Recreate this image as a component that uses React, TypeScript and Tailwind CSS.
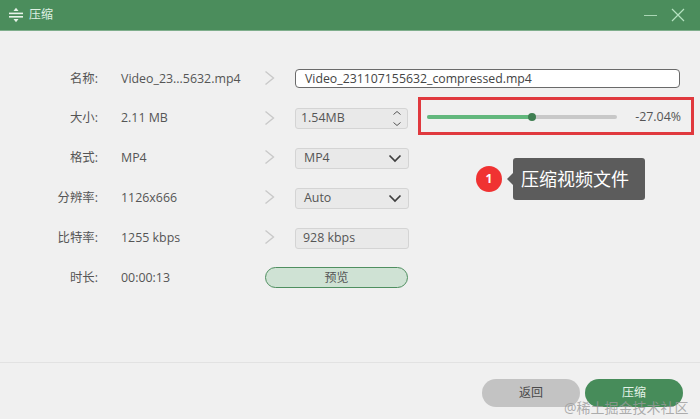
import React from 'react';

const font = { fontFamily: '"Open Sans", "Noto Sans CJK SC", sans-serif' };

const Chevron = () => (
  <svg width="12" height="16" viewBox="0 0 12 16" fill="none" stroke="#c9c9c9" strokeWidth="1.4" className="ml-[166px] -translate-y-[1px]">
    <path d="M1.5 1.5 L9.5 8 L1.5 14.5" />
  </svg>
);

const Caret = () => (
  <svg width="14" height="9" viewBox="0 0 14 9" fill="none" stroke="#3f3f3f" strokeWidth="1.7">
    <path d="M1.5 1.5 L7 7 L12.5 1.5" />
  </svg>
);

const Select = ({ value }: { value: string }) => (
  <div className="w-[114px] h-[21px] flex items-center justify-between pl-[8px] pr-[6px] bg-[#e9e9e9] border border-[#d4d4d4] rounded-[3px] text-[12.4px] text-[#555555]">
    {value}
    <Caret />
  </div>
);

const Row = ({ label, value, arrow = true, children }: { label: string; value: string; arrow?: boolean; children: React.ReactNode }) => (
  <div className="h-[39.8px] flex items-center relative">
    <div className="w-[98px] text-right text-[12.4px] text-[#555555]">{label}</div>
    <div className="absolute left-[121px] text-[12.4px] text-[#555555] whitespace-nowrap">{value}</div>
    {arrow ? <Chevron /> : <div className="w-[12px] ml-[166px]" />}
    <div className={arrow ? 'ml-[19px] flex items-center' : 'flex items-center -ml-[11px]'}>{children}</div>
  </div>
);

export default function App() {
  return (
    <div className="relative w-[700px] h-[419px] overflow-hidden bg-[#f0f0f0] flex flex-col" style={font}>
      <div className="h-[31px] shrink-0 bg-[#4b8d5c] border-b border-[#7fae8c] flex items-center pl-[8px] text-[12px] text-[#dff0e3]">
        <svg width="16" height="16" viewBox="0 0 16 16" fill="#e8f3ea" className="mr-[5px]">
          <rect x="1" y="5.6" width="14" height="1.6" />
          <rect x="1" y="9" width="14" height="1.6" />
          <path d="M8 0.8 L10.5 4 L5.5 4 Z" />
          <path d="M8 15.2 L10.5 12 L5.5 12 Z" />
        </svg>
        压缩
        <div className="ml-auto flex items-center pr-[15px] gap-[14px]">
          <div className="w-[13px] h-[1px] bg-[#a9d6b4]" />
          <svg width="14" height="14" viewBox="0 0 14 14" stroke="#b5e3c1" strokeWidth="1.2">
            <path d="M1 1 L13 13 M13 1 L1 13" />
          </svg>
        </div>
      </div>

      <div className="flex-1 pt-[28px]">
        <Row label="名称:" value="Video_23...5632.mp4">
          <div className="w-[385px] h-[19px] flex items-center pl-[9px] bg-white border border-[#6a6a6a] rounded-[4px] text-[12.3px] text-[#444444]">
            Video_231107155632_compressed.mp4
          </div>
        </Row>
        <Row label="大小:" value="2.11 MB">
          <div className="w-[113px] h-[21px] flex items-center justify-between pl-[5px] pr-[5px] bg-[#e9e9e9] border border-[#d4d4d4] rounded-[3px] text-[12.4px] text-[#555555]">
            1.54MB
            <svg width="10" height="17" viewBox="0 0 10 17" fill="none" stroke="#555555" strokeWidth="1">
              <path d="M1.5 4.5 L5 1.5 L8.5 4.5 M1.5 12.5 L5 15.5 L8.5 12.5" />
            </svg>
          </div>
        </Row>
        <Row label="格式:" value="MP4"><Select value="MP4" /></Row>
        <Row label="分辨率:" value="1126x666"><Select value="Auto" /></Row>
        <Row label="比特率:" value="1255 kbps">
          <div className="w-[114px] h-[21px] flex items-center pl-[7px] bg-[#e9e9e9] border border-[#d4d4d4] rounded-[3px] text-[12.4px] text-[#555555]">
            928 kbps
          </div>
        </Row>
        <Row label="时长:" value="00:00:13" arrow={false}>
          <div className="w-[143px] h-[21px] flex items-center justify-center bg-[#cfe2d4] border border-[#4f8f60] rounded-full text-[12px] text-[#555555]">
            预览
          </div>
        </Row>
      </div>

      <div className="h-[57px] shrink-0 border-t border-[#e2e2e2] flex justify-end items-start pt-[16px] pr-[17px] gap-[5px] text-[12px]">
        <div className="w-[98px] h-[28px] flex items-center justify-center rounded-full bg-[#c3c3c3] text-[#4a4a4a]">返回</div>
        <div className="w-[98px] h-[28px] flex items-center justify-center rounded-full bg-[#478c5a] text-[#e4f3e8]">压缩</div>
      </div>

      {/* red annotation over the slider */}
      <div className="absolute left-[418px] top-[97px] w-[276px] h-[38px] border-[3px] border-[#e0393e] flex items-center pl-[6px] pr-[10px] pt-[2px]">
        <div className="relative w-[190px] h-[4px] rounded-full bg-[#c8c8c8]">
          <div className="h-full w-[106px] rounded-full bg-[#62b77c]" />
          <div className="absolute left-[101px] -top-[2px] w-[8px] h-[8px] rounded-full bg-[#3f7f52]" />
        </div>
        <span className="ml-auto text-[12.4px] text-[#555555]">-27.04%</span>
      </div>

      {/* callout */}
      <div className="absolute left-[476px] top-[158px] flex items-center">
        <div className="w-[26px] h-[26px] rounded-full bg-[#f03232] text-white text-[12px] font-bold flex items-center justify-center">1</div>
        <div className="ml-[5px] w-0 h-0 border-y-[6px] border-y-transparent border-r-[6px] border-r-[#5c5c5c]" />
        <div className="w-[132px] h-[42px] rounded-[3px] bg-[#5c5c5c] text-white text-[18px] flex items-center pl-[8px] whitespace-nowrap">压缩视频文件</div>
      </div>

      {/* watermark */}
      <div className="absolute left-[564px] top-[397px] text-[14px] text-[#9a9a9a]/80 whitespace-nowrap">@稀土掘金技术社区</div>
    </div>
  );
}
